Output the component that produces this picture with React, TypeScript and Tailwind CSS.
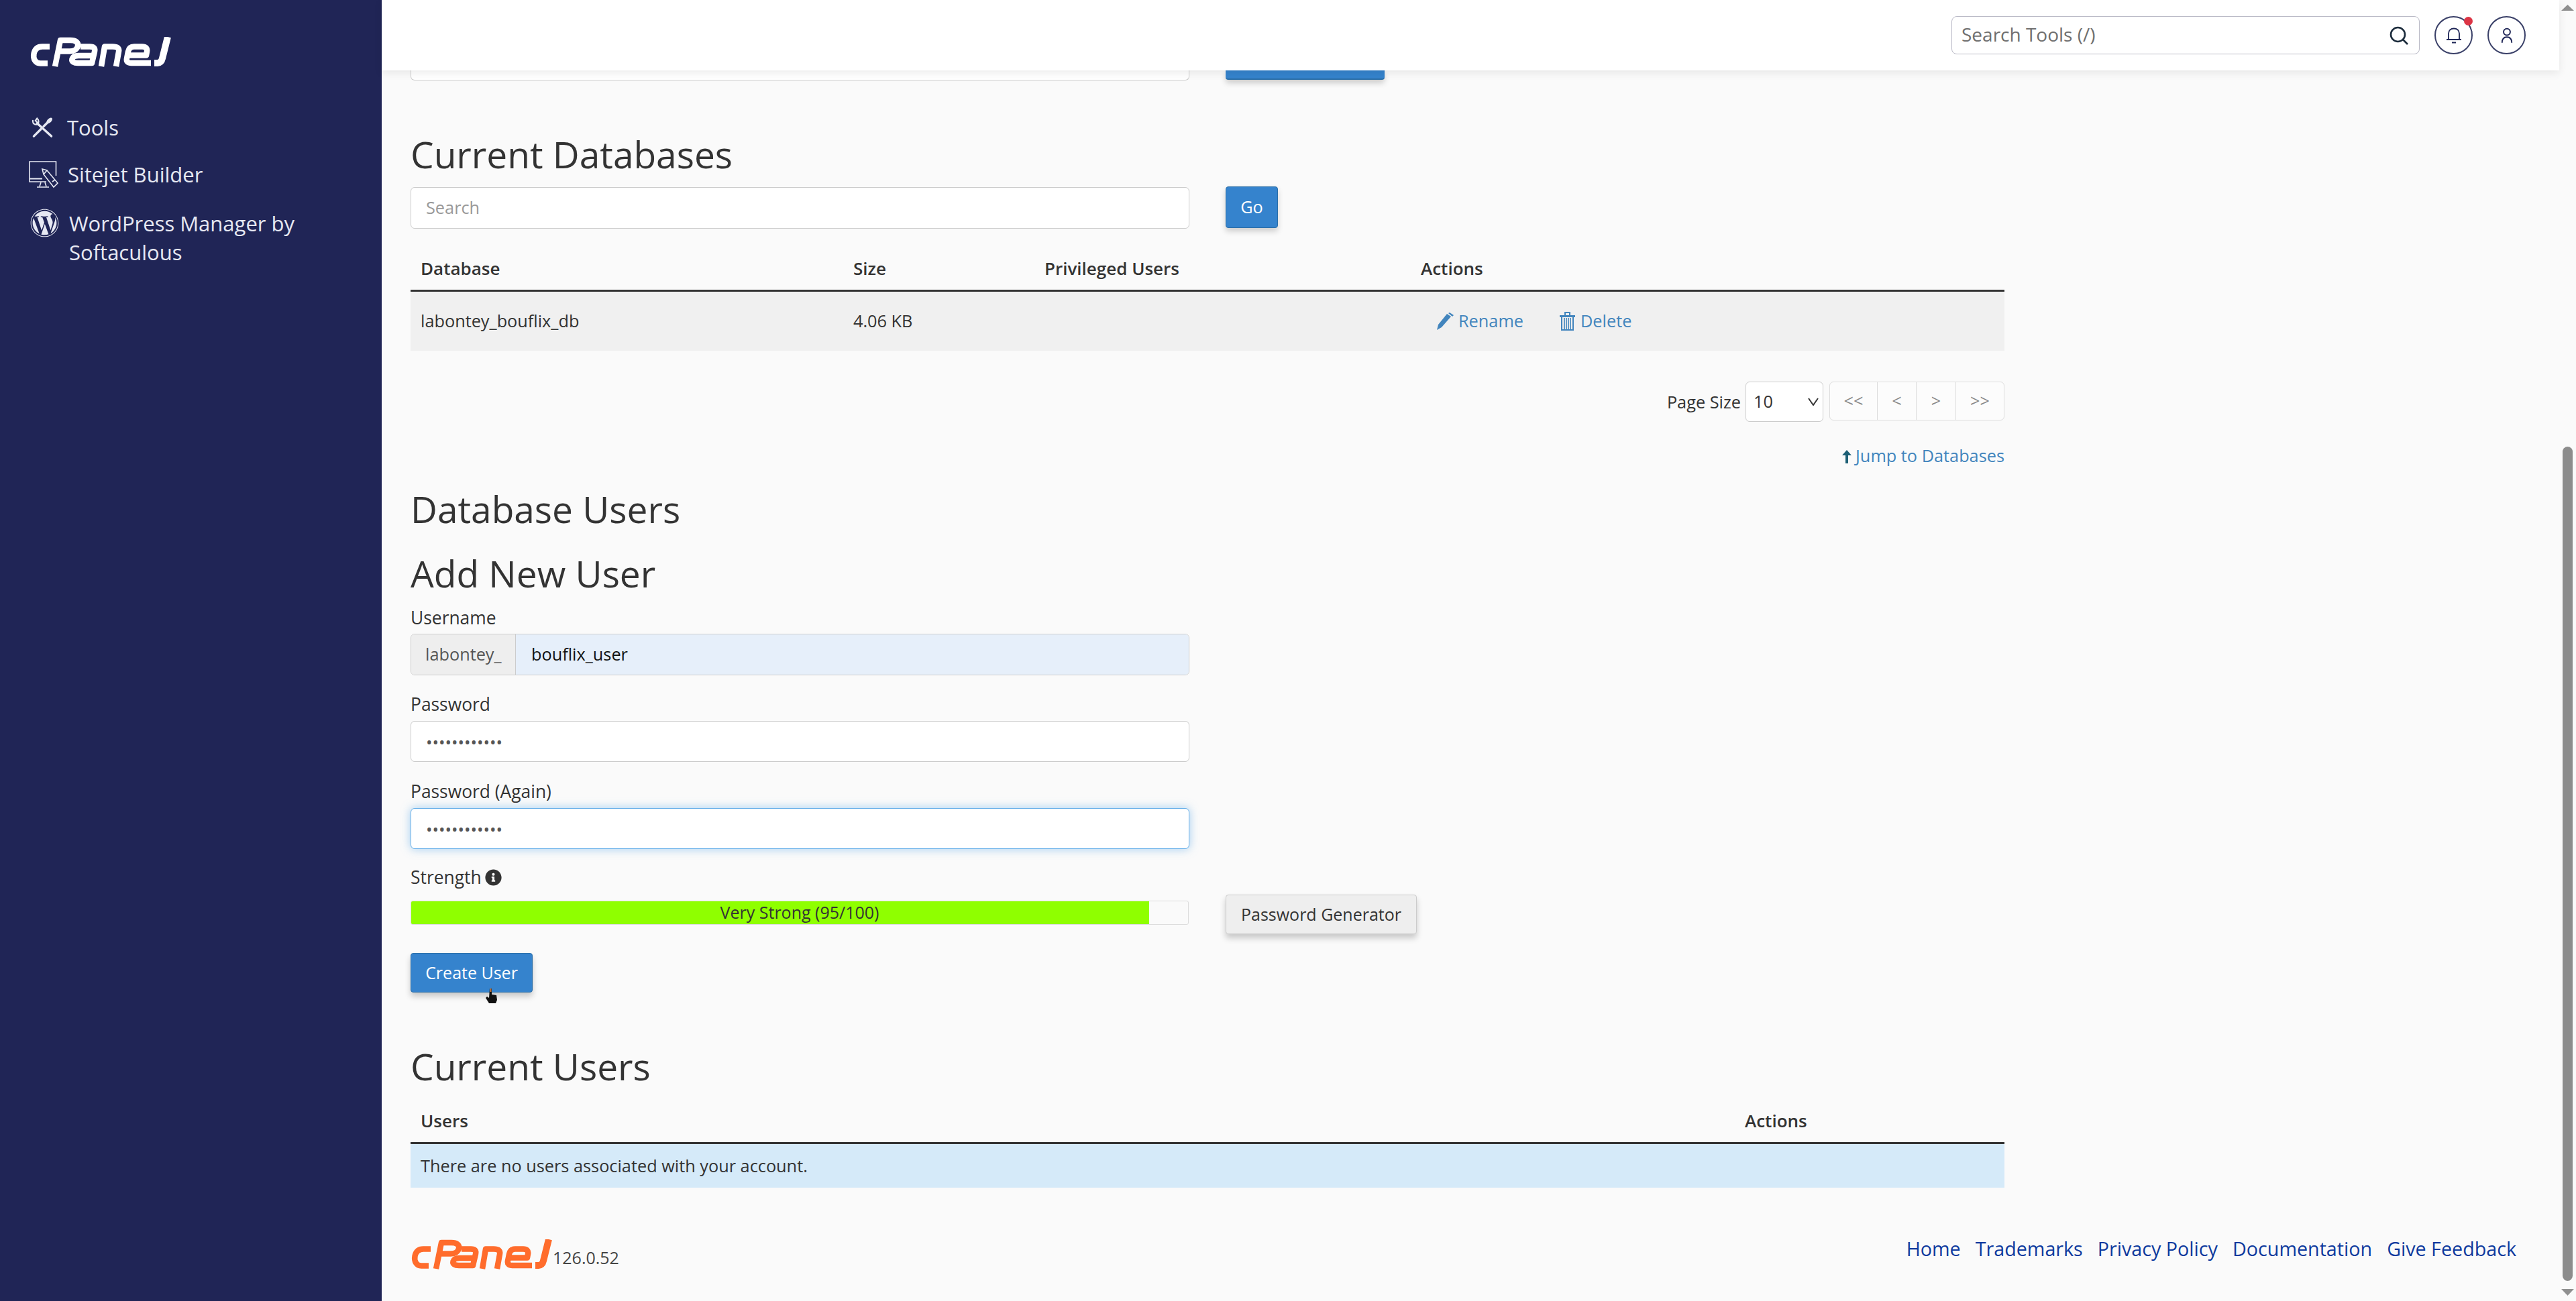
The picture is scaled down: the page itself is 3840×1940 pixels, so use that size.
import { FaInfoCircle, FaWordpress } from "react-icons/fa";

function CpanelLogo({ className }: { className: string }) {
  return (
    <svg viewBox="0 0 212 45" className={className} fill="none" stroke="currentColor" strokeWidth="8.500" strokeLinejoin="round">
      <path d="M30 14.500H19C12 14.500 8 18 6.500 25C5 33 9 39.500 16 39.500H27" />
      <path d="M38 44L46 5H61C69 5 73 8.500 72 13.500C71 18.500 66 21.500 60 21.500H45" />
      <path d="M76 14.500H90C96 14.500 98 17 97 22L93 39H72C66 39 62.500 37 63.500 33C64.500 29.500 68 28 73 28H94" />
      <path d="M107 44L112 14.500H124C131 14.500 134 17 133 22L129 44" />
      <path d="M147 27.500H174L175 22C176 17 173 14.500 168 14.500H156C151 14.500 148 17 147 22L145 32C144 37 147 39 152 39H181" />
      <path d="M206 0L198 32C197 37 194 39 191 39H186" strokeWidth="10" />
    </svg>
  );
}

function ToolsIcon() {
  return (
    <svg viewBox="0 0 33 32" className="w-[33px] h-[31px]" fill="none" stroke="currentColor" strokeLinecap="round">
      <path d="M8 9L30 29" strokeWidth="3.500" />
      <path d="M3 29L14 18M18 14L24 8" strokeWidth="3.500" />
      <ellipse cx="27" cy="5" rx="5.500" ry="3" transform="rotate(-45 27 5)" fill="currentColor" stroke="none" />
      <path d="M8 1.500L5.500 5L8 7.500M1.500 5C1 10 5 12 9 10.500C11 8 11 4 8 1.500" strokeWidth="2.200" />
    </svg>
  );
}

function SitejetIcon() {
  return (
    <svg viewBox="0 0 44 41" className="w-[44px] h-[41px]" fill="none" stroke="currentColor" strokeWidth="1.600">
      <path d="M40.500 22V1H1V31H26" />
      <path d="M1 26.500H20" strokeWidth="2" />
      <path d="M18 32L16 38M24 32L26 38M12 39H30" />
      <path d="M20 12L27 14L43 33L37 39L22 20Z" fill="#202556" />
      <path d="M22 20L27 14M35 31L39 28" />
    </svg>
  );
}

function BellIcon() {
  return (
    <svg viewBox="0 0 24 24" className="w-[24px] h-[24px]" fill="none" stroke="#1f2657" strokeWidth="1.800">
      <path d="M4 17.500V9C4 4 7.500 1.500 12 1.500S20 4 20 9V17.500" />
      <path d="M1 18H23" strokeWidth="2" />
      <path d="M9 22.500H15" strokeWidth="2" />
    </svg>
  );
}

function UserIcon() {
  return (
    <svg viewBox="0 0 20 26" className="w-[18px] h-[24px]" fill="none" stroke="#1f2657" strokeWidth="2.200">
      <circle cx="10" cy="7" r="5.500" />
      <path d="M2 25C2 19 5 15.500 10 15.500S18 19 18 25" />
    </svg>
  );
}

function SearchIcon() {
  return (
    <svg viewBox="0 0 28 28" className="w-[28px] h-[28px]" fill="none" stroke="#1c2c3c" strokeWidth="2.600">
      <circle cx="12.500" cy="12.500" r="10.500" />
      <path d="M20 20L27 27" />
    </svg>
  );
}

function HandCursor() {
  return (
    <svg viewBox="0 0 19 22" className="absolute left-[110px] top-[52px] w-[19px] h-[22px]">
      <path d="M7 0H10V9L17 10L18 17L16 22H6L1 14L3 12L6 14Z" fill="#111" />
      <path d="M7.500 0H9.500V5H7.500Z" fill="#c9793f" />
    </svg>
  );
}

function PencilGlyph() {
  return (
    <svg viewBox="0 0 26 26" className="w-[26px] h-[26px] text-[#4285bd]" fill="currentColor">
      <path d="M0 26L2 18L15 2L21 6L7 22Z" />
      <path d="M17 1L19 0L25 4L23 6Z" />
    </svg>
  );
}

function TrashGlyph() {
  return (
    <svg viewBox="0 0 23 28" className="w-[23px] h-[28px] text-[#4285bd]" fill="none" stroke="currentColor" strokeWidth="1.600">
      <path d="M0 6.500H23" strokeWidth="3" />
      <path d="M8 5V1H15V5" strokeWidth="2" />
      <path d="M3 8V27H20V8" strokeWidth="2" />
      <path d="M7 9V26M10 9V26M13 9V26M16 9V26" />
    </svg>
  );
}

function FormLabel({ children, className }: { children: React.ReactNode; className: string }) {
  return <div className={`leading-[36px] text-[26.4px] font-medium ${className}`}>{children}</div>;
}

const footerLinks = ["Home", "Trademarks", "Privacy Policy", "Documentation", "Give Feedback"];

export default function App() {
  return (
    <div className="flex w-screen h-screen overflow-hidden bg-[#fafafa] text-[#333] text-[25.3px] font-['Open_Sans',sans-serif]">
      {/* Sidebar */}
      <aside className="w-[569px] shrink-0 bg-[#202556] text-[#e6e8f2] text-[31px]">
        <CpanelLogo className="w-[212px] h-[45px] ml-[44px] mt-[55px] text-white" />
        <nav className="mt-[68px] flex flex-col">
          <a href="#" className="flex items-center h-[44px] pl-[47px] gap-[20px]">
            <ToolsIcon />
            <span>Tools</span>
          </a>
          <a href="#" className="flex items-center h-[44px] mt-[26px] pl-[43px] gap-[14px]">
            <SitejetIcon />
            <span>Sitejet Builder</span>
          </a>
          <a href="#" className="flex items-start mt-[30px] pl-[45px] gap-[15px] leading-[43px]">
            <FaWordpress className="w-[43px] h-[43px] shrink-0 mt-[-1px]" />
            <span className="w-[400px]">WordPress Manager by Softaculous</span>
          </a>
        </nav>
      </aside>

      {/* Main column */}
      <div className="flex-1 min-w-0 flex flex-col">
        <header className="relative z-10 h-[105px] shrink-0 bg-white shadow-[0_4px_12px_rgba(0,0,0,0.08)] flex items-center justify-end gap-[22px] pr-[50px]">
          <div className="w-[698px] h-[57px] border border-[#b9b9c6] rounded-[8px] flex items-center justify-between pl-[14px] pr-[16px]">
            <span className="text-[28px] text-[#6f6f6f] -mt-[3px]">Search Tools (/)</span>
            <SearchIcon />
          </div>
          <div className="relative w-[57px] h-[57px] rounded-full border-2 border-[#3a4068] flex items-center justify-center">
            <BellIcon />
            <span className="absolute right-[-2px] top-[-1px] w-[13px] h-[13px] rounded-full bg-[#dc3545]" />
          </div>
          <div className="w-[57px] h-[57px] rounded-full border-2 border-[#3a4068] flex items-center justify-center">
            <UserIcon />
          </div>
        </header>

        <main className="pl-[43px] w-[2419px]">
          {/* Tail of the form that is scrolled away */}
          <div className="flex gap-[54px]">
            <div className="w-[1161px] h-[15px] bg-white border border-t-0 border-[#ccc] rounded-b-[6px]" />
            <div className="w-[237px] h-[14px] bg-[#3583cd] border-b-2 border-[#2a6ea8] rounded-b-[4px] shadow-[0_5px_8px_rgba(0,0,0,0.18)]" />
          </div>

          <h2 className="mt-[82px] h-[60px] text-[55px] leading-[56px]">Current Databases</h2>
          <div className="flex items-start mt-[17px] gap-[54px]">
            <div className="w-[1161px] h-[62px] bg-white border border-[#ccc] rounded-[6px] flex items-center pl-[22px] text-[#999]">Search</div>
            <button className="w-[78px] h-[62px] -mt-[1px] bg-[#3583cd] border border-[#2a6ea8] rounded-[4px] text-white shadow-[0_5px_8px_rgba(0,0,0,0.18)]">Go</button>
          </div>

          <div className="mt-[38px] h-[56px] pl-[15px] border-b-[3px] border-[#333] grid grid-cols-[645px_285px_561px_1fr] text-[26px] font-semibold leading-[42px]">
            <div>Database</div>
            <div>Size</div>
            <div>Privileged Users</div>
            <div>Actions</div>
          </div>
          <div className="h-[88px] pl-[15px] bg-[#f0f0f0] grid grid-cols-[645px_285px_561px_1fr] items-center">
            <div>labontey_bouflix_db</div>
            <div>4.06 KB</div>
            <div />
            <div className="flex items-center pl-[24px] text-[#4285bd]">
              <PencilGlyph />
              <span className="ml-[6px]">Rename</span>
              <span className="ml-[54px]"><TrashGlyph /></span>
              <span className="ml-[8px]">Delete</span>
            </div>
          </div>

          <div className="mt-[46px] flex justify-end items-start">
            <span className="leading-[60px]">Page Size</span>
            <div className="relative ml-[7px]">
              <select defaultValue="10" className="appearance-none w-[116px] h-[60px] pl-[11px] bg-white border border-[#ccc] rounded-[6px]">
                <option>10</option>
              </select>
              <svg viewBox="0 0 16 12" className="absolute right-[7px] top-[24px] w-[16px] h-[12px]" fill="none" stroke="#333" strokeWidth="2">
                <path d="M1 1L8 11L15 1" />
              </svg>
            </div>
            <div className="ml-[9px] w-[261px] h-[58px] flex border border-[#ddd] rounded-[6px] text-[#888] bg-[#fcfcfc]">
              <span className="w-[71px] flex items-center justify-center border-r border-[#ddd]">&lt;&lt;</span>
              <span className="w-[58px] flex items-center justify-center border-r border-[#ddd]">&lt;</span>
              <span className="w-[59px] flex items-center justify-center border-r border-[#ddd]">&gt;</span>
              <span className="flex-1 flex items-center justify-center">&gt;&gt;</span>
            </div>
          </div>

          <div className="mt-[30px] flex justify-end items-center leading-[40px] text-[#4285bd]">
            <svg viewBox="0 0 14 20" className="w-[14px] h-[20px] mr-[6px] mt-[4px]" fill="#1d5f75">
              <path d="M7 0L14 8H9V20H5V8H0Z" />
            </svg>
            <a href="#">Jump to Databases</a>
          </div>

          <h2 className="mt-[32px] h-[60px] text-[55px] leading-[56px]">Database Users</h2>
          <h2 className="mt-[36px] h-[60px] text-[55px] leading-[56px]">Add New User</h2>

          <FormLabel className="mt-[16px]">Username</FormLabel>
          <div className="mt-[6px] w-[1161px] h-[62px] flex border border-[#ccc] rounded-[6px] overflow-hidden">
            <div className="w-[156px] bg-[#eee] border-r border-[#ccc] flex items-center pl-[21px] text-[#555]">labontey_</div>
            <div className="flex-1 bg-[#e6effa] flex items-center pl-[23px] text-[#111]">bouflix_user</div>
          </div>

          <FormLabel className="mt-[25px]">Password</FormLabel>
          <input type="password" readOnly value="aaaaaaaaaaaa" className="block mt-[7px] w-[1161px] h-[61px] pl-[22px] bg-white border border-[#ccc] rounded-[6px] text-[#555] outline-none" />

          <FormLabel className="mt-[26px]">Password (Again)</FormLabel>
          <input type="password" readOnly value="aaaaaaaaaaaa" className="block mt-[7px] w-[1161px] h-[61px] pl-[22px] bg-white border border-[#66afe9] rounded-[6px] text-[#555] outline-none shadow-[0_0_14px_rgba(102,175,233,0.6)]" />

          <FormLabel className="mt-[24px] flex items-center gap-[5px]">
            Strength
            <FaInfoCircle className="w-[25px] h-[25px] text-[#333]" />
          </FormLabel>

          <div className="mt-[8px] flex items-start">
            <div className="relative mt-[9px] w-[1160px] h-[36px] bg-[#fafafa] border border-[#ddd] rounded-[3px] overflow-hidden flex items-center justify-center text-[#333] text-[25px]">
              <div className="absolute left-0 top-0 bottom-0 w-[95%] bg-[#8fff00]" />
              <span className="relative">Very Strong (95/100)</span>
            </div>
            <button className="ml-[55px] w-[285px] h-[59px] bg-[#eee] border border-[#ccc] rounded-[4px] text-[#333] text-[25px] shadow-[0_6px_10px_rgba(0,0,0,0.2)]">Password Generator</button>
          </div>

          <button className="relative block mt-[28px] w-[182px] h-[59px] bg-[#3583cd] border border-[#2a6ea8] rounded-[4px] text-white text-[25px] shadow-[0_6px_10px_rgba(0,0,0,0.2)]">
            Create User
            <HandCursor />
          </button>

          <h2 className="mt-[82px] h-[60px] text-[55px] leading-[56px]">Current Users</h2>
          <div className="mt-[28px] h-[56px] pl-[15px] border-b-[3px] border-[#333] grid grid-cols-[1974px_1fr] text-[26px] font-semibold leading-[42px]">
            <div>Users</div>
            <div>Actions</div>
          </div>
          <div className="h-[65px] pl-[15px] bg-[#d5eaf9] flex items-center">There are no users associated with your account.</div>
        </main>

        <footer className="mt-[71px] pl-[43px] pr-[64px] flex justify-between items-start">
          <div className="flex items-end mt-[6px]">
            <CpanelLogo className="w-[212px] h-[45px] text-[#ff6c2c]" />
            <span className="mb-[2px] text-[25px] leading-[32px] text-[#444]">126.0.52</span>
          </div>
          <div className="flex gap-[22px] text-[28.7px] leading-[40px] text-[#0e3a9e]">
            {footerLinks.map((l) => (
              <a key={l} href="#">{l}</a>
            ))}
          </div>
        </footer>
      </div>

      {/* Scrollbar */}
      <div className="w-[25px] shrink-0 flex flex-col items-center bg-[#fafafa]">
        <svg viewBox="0 0 19 9" className="mt-[7px] w-[19px] h-[9px]" fill="#909090">
          <path d="M9.500 0L19 9H0Z" />
        </svg>
        <div className="mt-[650px] w-[15px] h-[1244px] rounded-full bg-[#8c8c8c]" />
        <svg viewBox="0 0 19 10" className="mt-[12px] w-[19px] h-[10px]" fill="#909090">
          <path d="M0 0H19L9.500 10Z" />
        </svg>
      </div>
    </div>
  );
}
